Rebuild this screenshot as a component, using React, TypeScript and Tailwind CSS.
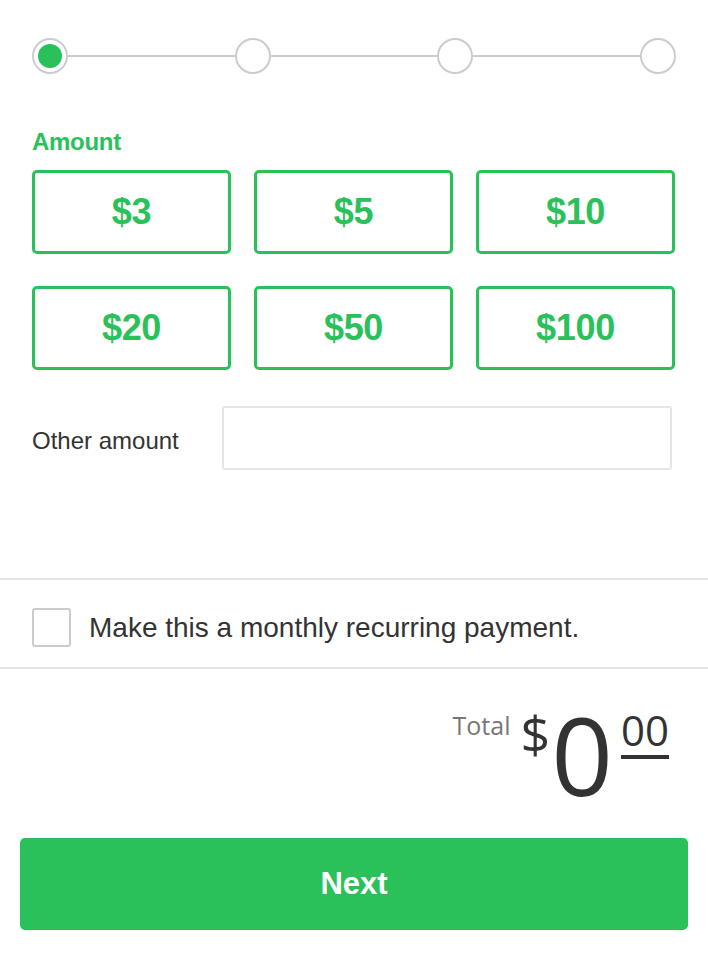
import React from "react";

function Step({ active }: { active?: boolean }) {
  return (
    <div className="w-[36px] h-[36px] rounded-full border-2 border-[#cccccc] bg-white flex items-center justify-center shrink-0">
      {active && <div className="w-[24px] h-[24px] rounded-full bg-[#2ac15a]" />}
    </div>
  );
}

function Line() {
  return <div className="flex-1 h-[2px] bg-[#cccccc]" />;
}

const amounts = ["$3", "$5", "$10", "$20", "$50", "$100"];

export default function App() {
  return (
    <div className="w-[708px] h-[956px] bg-white font-['Liberation_Sans',Arial,sans-serif] text-[#333333] overflow-hidden">
      <div className="px-8 pt-[38px] flex items-center">
        <Step active />
        <Line />
        <Step />
        <Line />
        <Step />
        <Line />
        <Step />
      </div>

      <div className="px-8 mt-[56px]">
        <div className="text-[24px] leading-none font-bold text-[#2ac15a] tracking-[-0.3px]">Amount</div>
        <div className="mt-[16px] grid grid-cols-3 gap-x-[23px] gap-y-8 pr-[1px]">
          {amounts.map((a) => (
            <button
              key={a}
              className="h-[84px] border-[3px] border-[#2ac15a] rounded-[5px] bg-white text-[36px] font-bold text-[#2ac15a] tracking-[-0.3px] flex items-center justify-center"
            >
              {a}
            </button>
          ))}
        </div>
        <div className="mt-[36px] flex items-center">
          <div className="w-[190px] text-[24px] leading-none pt-[6px]">Other amount</div>
          <div className="w-[450px] h-[64px] border-2 border-[#e6e6e6] rounded-[3px]" />
        </div>
      </div>

      <div className="mt-[108px] h-[2px] bg-[#e3e3e3]" />
      <div className="px-8 pt-[28px] pb-[20px] flex items-center">
        <div className="w-[39px] h-[39px] border-2 border-[#cccccc] rounded-[3px] bg-white shrink-0" />
        <div className="ml-[18px] text-[28px] leading-none">Make this a monthly recurring payment.</div>
      </div>
      <div className="h-[2px] bg-[#e3e3e3]" />

      <div className="mt-[32px] pr-[39px] flex justify-end items-start font-['Open_Sans',sans-serif] text-[#333333]">
        <span className="mt-[12px] text-[25px] leading-none text-[#777777]">Total</span>
        <span className="ml-[10px] mt-[6px] text-[52px] leading-none">$</span>
        <span className="ml-[1px] text-[108px] leading-none">0</span>
        <span className="ml-[8px] mt-[8px] text-[42px] leading-none pb-[4px] border-b-[4px] border-[#333333]">00</span>
      </div>

      <div className="px-5 mt-[29px]">
        <button className="w-full h-[92px] rounded-[5px] bg-[#2ac15a] text-white text-[31px] font-bold flex items-center justify-center">
          Next
        </button>
      </div>
    </div>
  );
}
